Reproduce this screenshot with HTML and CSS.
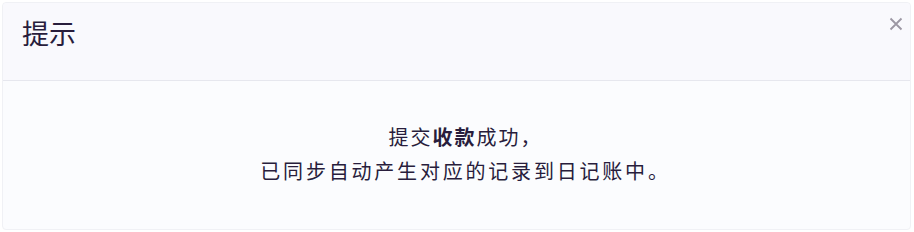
FILE: index.html
```html
<!DOCTYPE html>
<html>

<head>
    <meta charset="UTF-8">
    <meta name="viewport" content="width=device-width, initial-scale=1.0">
    <link rel="stylesheet" href="styles.css">
    <title>提示</title>
</head>

<body>
    <div class="modal">
        <div class="modal-header">
            <span class="modal-title">提示</span>
            <span class="modal-close">
                <svg width="14" height="14" viewBox="0 0 14 14">
                    <path d="M1.5 1.5 L12.5 12.5 M12.5 1.5 L1.5 12.5" stroke="#9c97a3" stroke-width="1.8" fill="none" />
                </svg>
            </span>
        </div>
        <div class="modal-body">
            <p class="line line-first">提交<b>收款</b>成功，</p>
            <p class="line line-second">已同步自动产生对应的记录到日记账中。</p>
        </div>
    </div>
</body>

</html>
```

FILE: styles.css
```css
html,
body {
    width: 100%;
    height: 100%;
    margin: 0;
    padding: 0;
    background: #ffffff;
}

body {
    font-family: "Noto Sans CJK SC", "Noto Sans", sans-serif;
    color: #281d3c;
}

.modal {
    box-sizing: border-box;
    margin: 2px 3px 0 2px;
    height: 228px;
    border: 1px solid #f0f1f5;
    border-radius: 4px;
    background: #fbfcfe;
    display: flex;
    flex-direction: column;
}

.modal-header {
    height: 77px;
    border-bottom: 1px solid #e6e7ee;
    background: #f9f9fd;
    display: flex;
    align-items: center;
    justify-content: space-between;
    padding: 0 7px 0 19px;
    border-radius: 4px 4px 0 0;
}

.modal-title {
    font-size: 27px;
    line-height: 1;
    margin-top: -18px;
}

.modal-close {
    display: flex;
    margin-top: -36px;
}

.modal-body {
    flex: 1;
    display: flex;
    flex-direction: column;
    align-items: center;
    justify-content: center;
    padding-left: 18px;
    padding-top: 2px;
    padding-bottom: 4px;
}

.line {
    margin: 0;
    font-size: 20px;
    line-height: 34px;
}

.line-first {
    letter-spacing: 2px;
}

.line-second {
    letter-spacing: 2.8px;
}

.line b {
    font-weight: bold;
}
```
